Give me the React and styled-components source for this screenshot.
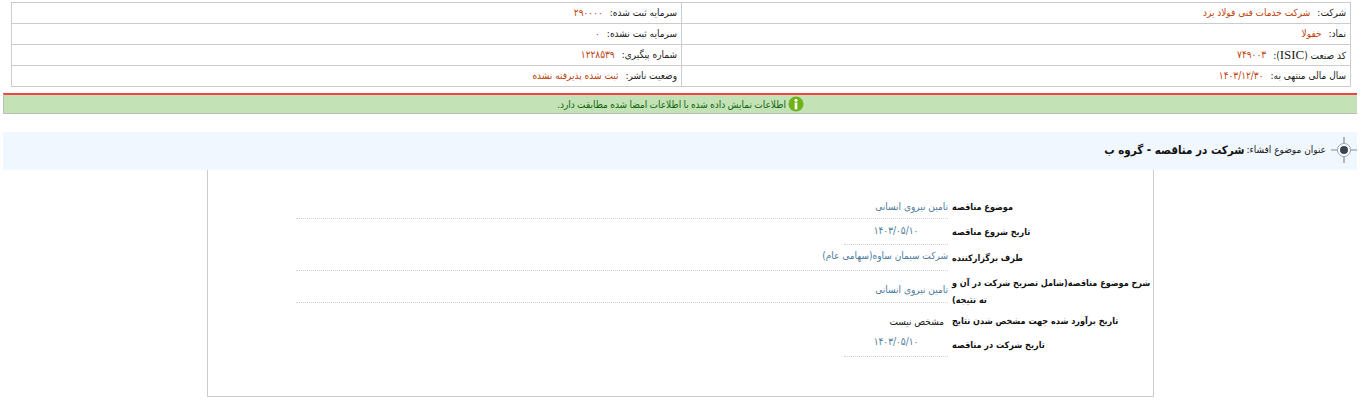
import React from 'react';
import styled, { createGlobalStyle } from 'styled-components';

const GlobalStyle = createGlobalStyle`
  html, body {
    margin: 0;
    padding: 0;
    background: #fff;
  }
  body {
    direction: rtl;
    font-family: "DejaVu Sans Condensed", "DejaVu Sans", sans-serif;
    font-stretch: condensed;
    font-size: 10px;
  }
`;

const Page = styled.div`
  width: 1363px;
  height: 417px;
  overflow: hidden;
  padding-top: 2px;
  box-sizing: border-box;
`;

const InfoTable = styled.div`
  display: grid;
  grid-template-columns: 669px 670px;
  grid-auto-rows: 21px;
  margin: 0 12px 0 0;
  width: 1339px;
  border-top: 1px solid #ccc;
  border-right: 1px solid #ccc;
  box-sizing: content-box;
`;

const InfoCell = styled.div`
  display: flex;
  align-items: center;
  gap: 7px;
  padding: 0 4px 1px 0;
  border-left: 1px solid #ccc;
  border-bottom: 1px solid #ccc;
  box-sizing: border-box;
  color: #222;
  white-space: nowrap;
`;

const InfoValue = styled.span`
  color: #c0410c;
`;

const LatinCode = styled.span`
  font-family: "Liberation Serif", serif;
  font-size: 13px;
`;

const Banner = styled.div`
  display: flex;
  align-items: center;
  justify-content: center;
  gap: 2px;
  height: 21px;
  margin: 6px 6px 0 3px;
  box-sizing: border-box;
  background: #c3e2b5;
  border-top: 2px solid #f04545;
  border-bottom: 1px solid #bdbdbd;
  border-left: 1px solid #bdbdbd;
  color: #11650f;
  word-spacing: -0.6px;
`;

const TitleBar = styled.div`
  display: flex;
  align-items: center;
  gap: 5px;
  height: 38px;
  margin: 18px 6px 0 3px;
  padding-bottom: 3px;
  box-sizing: border-box;
  background: #f0f7fe;
  color: #222;
`;

const TitleText = styled.strong`
  margin-right: -3px;
  font-size: 11.5px;
  font-weight: 700;
  color: #111;
`;

const Panel = styled.div`
  width: 947px;
  height: 227px;
  margin: 0 209px 0 0;
  padding: 23px 1px 0 0;
  border: 1px solid #ccc;
  border-top: none;
  box-sizing: border-box;
`;

const FormRow = styled.div`
  display: flex;
  align-items: center;
  height: ${(p) => p.$h}px;
`;

// shift moves the text down (positive) or up (negative) inside its row
const shiftPadding = (shift = 0) => `${Math.max(shift, 0)}px 0 ${Math.max(-shift, 0)}px`;

const FormLabel = styled.div`
  width: 200px;
  flex: none;
  padding: ${(p) => shiftPadding(p.$shift)};
  font-size: 9px;
  font-weight: 700;
  line-height: 17px;
  text-align: left;
  color: #111;
`;

const FormValue = styled.div`
  align-self: stretch;
  display: flex;
  align-items: center;
  justify-content: ${(p) => (p.$narrow ? 'center' : 'flex-start')};
  box-sizing: border-box;
  width: ${(p) => (p.$narrow ? 104 : 652)}px;
  margin-right: 4px;
  padding: ${(p) => shiftPadding(p.$shift)};
  padding-right: ${(p) => (p.$plain ? 4 : 0)}px;
  border-bottom: ${(p) => (p.$plain ? 'none' : '1px dotted #d2d2d2')};
  color: ${(p) => (p.$plain ? '#222' : '#4d7c9c')};
`;

const infoRows = [
  ['شرکت:', 'شرکت خدمات فنی فولاد یزد', 'سرمایه ثبت شده:', '۲۹۰۰۰۰'],
  ['نماد:', 'خفولا', 'سرمایه ثبت نشده:', '۰'],
  [<span key="isic">کد صنعت (<LatinCode>ISIC</LatinCode>):</span>, '۷۴۹۰۰۳', 'شماره پیگیری:', '۱۲۲۸۵۳۹'],
  ['سال مالی منتهی به:', '۱۴۰۳/۱۲/۳۰', 'وضعیت ناشر:', 'ثبت شده پذیرفته نشده'],
];

const formRows = [
  { h: 26, label: 'موضوع مناقصه', value: 'تامین نیروی انسانی', labelShift: 2, valueShift: 2 },
  { h: 26, label: 'تاریخ شروع مناقصه', value: '۱۴۰۳/۰۵/۱۰', narrow: true, valueShift: -2 },
  { h: 26, label: 'طرف برگزارکننده', value: 'شرکت سیمان ساوه(سهامی عام)', valueShift: -4 },
  { h: 32, label: 'شرح موضوع مناقصه(شامل تصریح شرکت در آن و نه نتیجه)', value: 'تامین نیروی انسانی', labelShift: 10, valueShift: 6 },
  { h: 31, label: 'تاریخ برآورد شده جهت مشخص شدن نتایج', value: 'مشخص نیست', plain: true, labelShift: 6, valueShift: 6 },
  { h: 23, label: 'تاریخ شرکت در مناقصه', value: '۱۴۰۳/۰۵/۱۰', narrow: true, valueShift: -8 },
];

const InfoIcon = () => (
  <svg width="16" height="16" viewBox="0 0 16 16">
    <circle cx="8" cy="8" r="7.5" fill="#6fb31a" />
    <circle cx="8" cy="4.2" r="1.5" fill="#fff" />
    <rect x="6.7" y="6.5" width="2.6" height="6.8" fill="#fff" />
  </svg>
);

const TargetIcon = () => (
  <svg width="26" height="26" viewBox="0 0 26 26" fill="none">
    <circle cx="13" cy="13" r="6.5" fill="#fff" stroke="#97a3ae" strokeWidth="1" />
    <circle cx="13" cy="13" r="4" fill="#3a4350" />
    <path d="M13 0v6M13 20v6M0 13h6M20 13h6" stroke="#828e9a" strokeWidth="1.2" />
  </svg>
);

export default function App() {
  return (
    <Page>
      <GlobalStyle />
      <InfoTable>
        {infoRows.map((row) => (
          <React.Fragment key={row[2]}>
            <InfoCell>
              {row[0]}
              <InfoValue>{row[1]}</InfoValue>
            </InfoCell>
            <InfoCell>
              {row[2]}
              <InfoValue>{row[3]}</InfoValue>
            </InfoCell>
          </React.Fragment>
        ))}
      </InfoTable>
      <Banner>
        <InfoIcon />
        اطلاعات نمایش داده شده با اطلاعات امضا شده مطابقت دارد.
      </Banner>
      <TitleBar>
        <TargetIcon />
        <span>عنوان موضوع افشاء:</span>
        <TitleText>شرکت در مناقصه - گروه ب</TitleText>
      </TitleBar>
      <Panel>
        {formRows.map((r) => (
          <FormRow key={r.label} $h={r.h}>
            <FormLabel $shift={r.labelShift}>{r.label}</FormLabel>
            <FormValue $narrow={r.narrow} $plain={r.plain} $shift={r.valueShift}>{r.value}</FormValue>
          </FormRow>
        ))}
      </Panel>
    </Page>
  );
}
